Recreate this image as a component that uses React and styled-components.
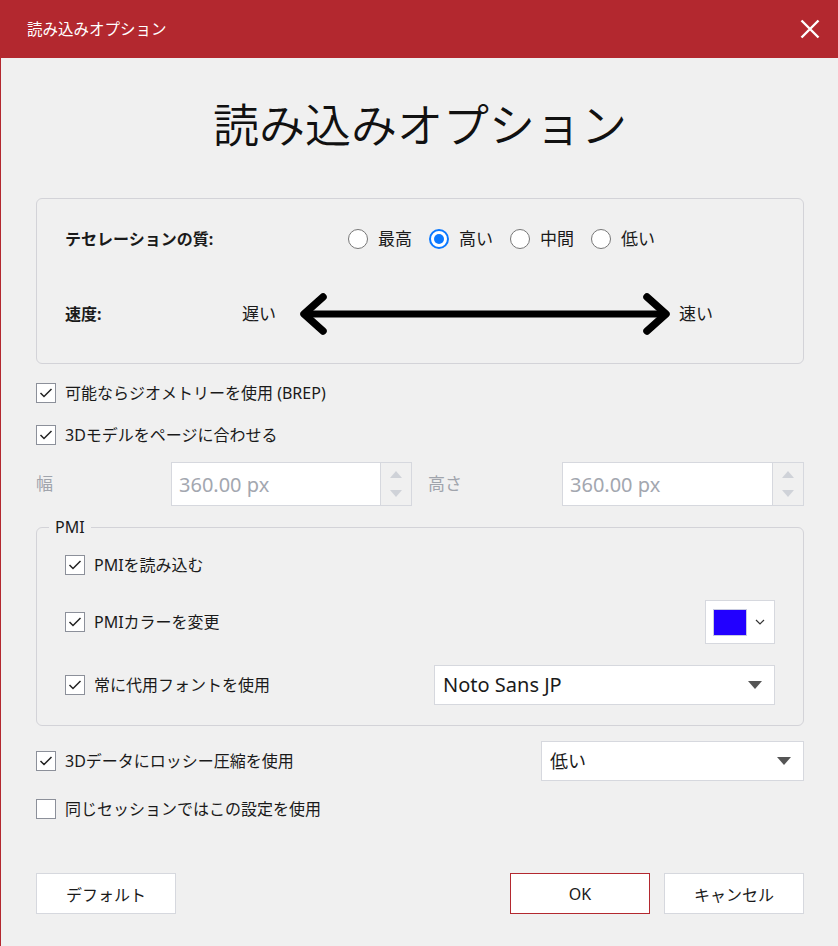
import React from 'react';
import styled, { createGlobalStyle } from 'styled-components';

const GlobalStyle = createGlobalStyle`
  html, body { margin: 0; padding: 0; background: #f0f0f0; }
  body { font-family: "Noto Sans", "Noto Sans CJK JP", sans-serif; color: #1a1a1a; font-weight: 400; }
  * { box-sizing: border-box; }
`;

const Window = styled.div`
  width: 838px;
  height: 946px;
  background: #f0f0f0;
  border-left: 1px solid #b3282f;
  display: flex;
  flex-direction: column;
`;

const TitleBar = styled.div`
  height: 58px;
  background: #b3282f;
  display: flex;
  align-items: center;
  justify-content: space-between;
  padding: 0 17px 0 27px;
  margin-left: -1px;
  color: #fff;
  font-size: 15.5px;
  line-height: 20px;
`;

const CloseButton = styled.button`
  width: 22px;
  height: 22px;
  padding: 0;
  border: none;
  background: transparent;
  display: flex;
  align-items: center;
  justify-content: center;
`;

const Content = styled.div`
  padding: 0 34px 0 35px;
  display: flex;
  flex-direction: column;
`;

const Heading = styled.h1`
  height: 140px;
  margin: 0;
  padding-bottom: 12px;
  display: flex;
  align-items: center;
  justify-content: center;
  font-family: "Noto Sans CJK JP", sans-serif;
  font-size: 46px;
  font-weight: 350;
  line-height: 1;
  color: #111;
`;

const Panel = styled.div`
  border: 1px solid #d3d3d8;
  border-radius: 6px;
  padding: 20px 28px 29px 28px;
  display: flex;
  flex-direction: column;
  gap: 35px;
`;

const PanelRow = styled.div`
  display: flex;
  align-items: center;
  height: 40px;
`;

const RowLabel = styled.div`
  width: ${p => p.$w}px;
  flex-shrink: 0;
  font-weight: 700;
  font-size: 16px;
  line-height: 22px;
`;

const RadioGroup = styled.div`
  display: flex;
  align-items: center;
  gap: 17px;
`;

const RadioItem = styled.label`
  display: flex;
  align-items: center;
  gap: 10px;
  font-size: 17px;
  line-height: 22px;
`;

const RadioCircle = styled.span`
  width: 20px;
  height: 20px;
  border-radius: 50%;
  background: #fff;
  border: ${p => (p.$checked ? '2px solid #0a78ff' : '1.5px solid #777')};
  display: flex;
  align-items: center;
  justify-content: center;
  &::after {
    content: '';
    display: ${p => (p.$checked ? 'block' : 'none')};
    width: 10px;
    height: 10px;
    border-radius: 50%;
    background: #0a78ff;
  }
`;

const SpeedText = styled.span`
  font-size: 17px;
  line-height: 22px;
  margin-right: ${p => p.$mr || 0}px;
  margin-left: ${p => p.$ml || 0}px;
`;

const CheckRow = styled.label`
  display: flex;
  align-items: center;
  gap: 9px;
  height: ${p => p.$h || 30}px;
  margin-top: ${p => p.$mt || 0}px;
  font-size: 16px;
  line-height: 22px;
`;

const Box = styled.span`
  width: 20px;
  height: 20px;
  flex-shrink: 0;
  background: #fff;
  border: 1px solid #8c909a;
  display: flex;
  align-items: center;
  justify-content: center;
`;

const SizeRow = styled.div`
  display: grid;
  grid-template-columns: 135px 241px 16px 134px 242px;
  align-items: center;
  height: 44px;
  margin-top: ${p => p.$mt}px;
`;

const MutedLabel = styled.span`
  color: #a0a4ac;
  font-size: 17px;
  line-height: 22px;
  grid-column: ${p => p.$col};
`;

const SpinBox = styled.div`
  grid-column: ${p => p.$col};
  height: 44px;
  display: flex;
  border: 1px solid #d6d8de;
  background: #fff;
`;

const SpinText = styled.div`
  flex: 1;
  display: flex;
  align-items: center;
  padding-left: 7px;
  font-size: 20px;
  color: #a3a7b0;
`;

const SpinButtons = styled.div`
  width: 31px;
  border-left: 1px solid #d6d8de;
  background: #f0f0f0;
  display: flex;
  flex-direction: column;
  align-items: center;
  justify-content: space-between;
  padding: 8px 0 8px;
`;

const Group = styled.fieldset`
  margin: 10px 0 0 0;
  padding: 7px 28px 20px 12px;
  border: 1px solid #d3d3d8;
  border-radius: 6px;
  min-width: 0;
`;

const Legend = styled.legend`
  padding: 0 6px;
  font-size: 16px;
  line-height: 22px;
`;

const GroupBody = styled.div`
  padding-left: 16px;
  display: flex;
  flex-direction: column;
`;

const GroupRow = styled.div`
  display: flex;
  align-items: center;
  justify-content: space-between;
  height: ${p => p.$h}px;
  margin-top: ${p => p.$mt || 0}px;
`;

const ColorPicker = styled.div`
  width: 70px;
  height: 44px;
  background: #fff;
  border: 1px solid #d6d8de;
  display: flex;
  align-items: center;
  padding-left: 7px;
  gap: 8px;
`;

const Swatch = styled.span`
  width: 34px;
  height: 27px;
  background: ${p => p.$color};
  border: 1px solid #c8cbe0;
`;

const Select = styled.div`
  width: ${p => p.$w}px;
  height: ${p => p.$h || 40}px;
  background: #fff;
  border: 1px solid #d6d8de;
  display: flex;
  align-items: center;
  justify-content: space-between;
  padding: 0 12px 0 8px;
  font-size: ${p => (p.$latin ? 20 : 18)}px;
  line-height: 24px;
`;

const ButtonRow = styled.div`
  display: flex;
  align-items: center;
  gap: 14px;
  margin-top: 49px;
`;

const Spacer = styled.div`
  flex: 1;
`;

const Button = styled.button`
  width: 140px;
  height: 41px;
  background: #fff;
  border: 1px solid ${p => (p.$primary ? '#b3282f' : '#d6d8de')};
  font-family: "Noto Sans", "Noto Sans CJK JP", sans-serif;
  font-weight: 400;
  font-size: 16px;
  color: #1a1a1a;
  padding: 0;
`;

const Check = () => (
  <svg width="14" height="12" viewBox="0 0 14 12">
    <polyline points="1.5,6 5,9.5 12.5,2" fill="none" stroke="#222" strokeWidth="1.5" />
  </svg>
);

const CheckBox = ({ checked }) => <Box>{checked && <Check />}</Box>;

const DownTriangle = () => (
  <svg width="14" height="8" viewBox="0 0 14 8">
    <path d="M0 0 H14 L7 8 Z" fill="#555" />
  </svg>
);

const SpinArrow = ({ up }) => (
  <svg width="12" height="7" viewBox="0 0 12 7">
    <path d={up ? 'M0 7 L6 0 L12 7 Z' : 'M0 0 L6 7 L12 0 Z'} fill="#cfd2d8" />
  </svg>
);

const Arrow = () => (
  <svg width="374" height="44" viewBox="0 0 374 44">
    <line x1="8" y1="22" x2="366" y2="22" stroke="#000" strokeWidth="7" />
    <polyline points="25,5 6,22 25,39" fill="none" stroke="#000" strokeWidth="7.5" strokeLinecap="round" strokeLinejoin="round" />
    <polyline points="349,5 368,22 349,39" fill="none" stroke="#000" strokeWidth="7.5" strokeLinecap="round" strokeLinejoin="round" />
  </svg>
);

const qualities = [
  { label: '最高', checked: false },
  { label: '高い', checked: true },
  { label: '中間', checked: false },
  { label: '低い', checked: false },
];

export default function App() {
  return (
    <>
      <GlobalStyle />
      <Window>
        <TitleBar>
          <span>読み込みオプション</span>
          <CloseButton aria-label="close">
            <svg width="20" height="20" viewBox="0 0 20 20">
              <path d="M1.5 1.5 L18.5 18.5 M18.5 1.5 L1.5 18.5" stroke="#fff" strokeWidth="2.4" />
            </svg>
          </CloseButton>
        </TitleBar>
        <Content>
          <Heading>読み込みオプション</Heading>
          <Panel>
            <PanelRow>
              <RowLabel $w={283}>テセレーションの質:</RowLabel>
              <RadioGroup>
                {qualities.map(q => (
                  <RadioItem key={q.label}>
                    <RadioCircle $checked={q.checked} />
                    {q.label}
                  </RadioItem>
                ))}
              </RadioGroup>
            </PanelRow>
            <PanelRow>
              <RowLabel $w={177}>速度:</RowLabel>
              <SpeedText $mr={22}>遅い</SpeedText>
              <Arrow />
              <SpeedText $ml={7}>速い</SpeedText>
            </PanelRow>
          </Panel>

          <CheckRow $mt={14}>
            <CheckBox checked />
            可能ならジオメトリーを使用 (BREP)
          </CheckRow>
          <CheckRow $mt={12}>
            <CheckBox checked />
            3Dモデルをページに合わせる
          </CheckRow>

          <SizeRow $mt={12}>
            <MutedLabel $col={1}>幅</MutedLabel>
            <SpinBox $col={2}>
              <SpinText>360.00 px</SpinText>
              <SpinButtons>
                <SpinArrow up />
                <SpinArrow />
              </SpinButtons>
            </SpinBox>
            <MutedLabel $col={4}>高さ</MutedLabel>
            <SpinBox $col={5}>
              <SpinText>360.00 px</SpinText>
              <SpinButtons>
                <SpinArrow up />
                <SpinArrow />
              </SpinButtons>
            </SpinBox>
          </SizeRow>

          <Group>
            <Legend>PMI</Legend>
            <GroupBody>
              <GroupRow $h={40}>
                <CheckRow>
                  <CheckBox checked />
                  PMIを読み込む
                </CheckRow>
              </GroupRow>
              <GroupRow $h={44} $mt={15}>
                <CheckRow>
                  <CheckBox checked />
                  PMIカラーを変更
                </CheckRow>
                <ColorPicker>
                  <Swatch $color="#2200ff" />
                  <svg width="10" height="6" viewBox="0 0 10 6">
                    <polyline points="1,1 5,5 9,1" fill="none" stroke="#333" strokeWidth="1.2" />
                  </svg>
                </ColorPicker>
              </GroupRow>
              <GroupRow $h={40} $mt={21}>
                <CheckRow>
                  <CheckBox checked />
                  常に代用フォントを使用
                </CheckRow>
                <Select $w={341} $latin>
                  Noto Sans JP
                  <DownTriangle />
                </Select>
              </GroupRow>
            </GroupBody>
          </Group>

          <GroupRow $h={40} $mt={15}>
            <CheckRow>
              <CheckBox checked />
              3Dデータにロッシー圧縮を使用
            </CheckRow>
            <Select $w={263}>
              低い
              <DownTriangle />
            </Select>
          </GroupRow>
          <CheckRow $mt={13}>
            <CheckBox />
            同じセッションではこの設定を使用
          </CheckRow>

          <ButtonRow>
            <Button>デフォルト</Button>
            <Spacer />
            <Button $primary>OK</Button>
            <Button>キャンセル</Button>
          </ButtonRow>
        </Content>
      </Window>
    </>
  );
}
